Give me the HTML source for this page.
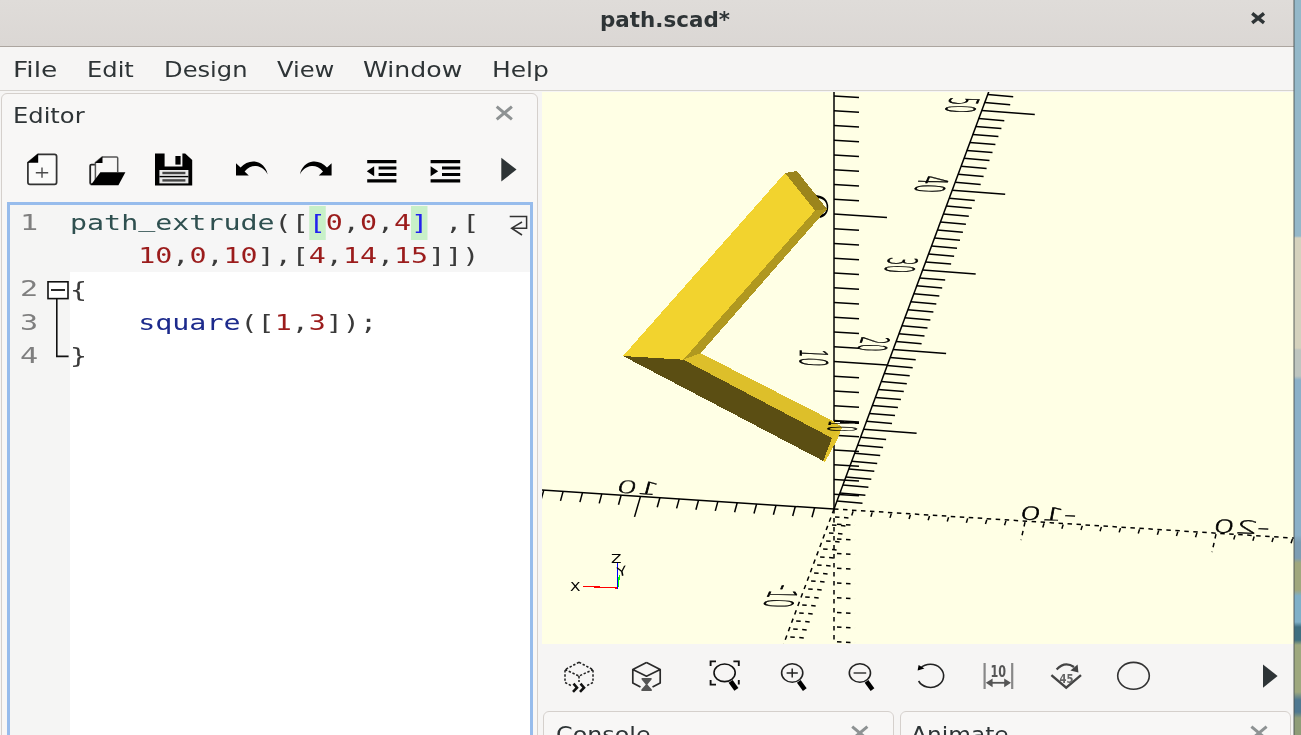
<!DOCTYPE html>
<html lang="en">
<head>
<meta charset="utf-8">
<title>path.scad*</title>
<style>
html,body{margin:0;padding:0;}
body{width:1301px;height:735px;overflow:hidden;position:relative;background:#8fb3c4;font-family:"DejaVu Sans","Liberation Sans",sans-serif;color:#2e3436;}
.abs{position:absolute;}
#desk{left:1294px;top:0;width:7px;height:735px;background:linear-gradient(to bottom,#94b8c9 0,#94b8c9 236px,#d5d2bd 238px,#d5d2bd 348px,#bec5bf 350px,#bec5bf 376px,#8bb0c8 380px,#8bb0c8 535px,#7d9db3 542px,#7d9db3 558px,#a0a77d 563px,#a0a77d 590px,#7fb0c8 596px,#7fb0c8 622px,#3f6f80 627px,#3f6f80 640px,#9ea87e 645px,#9ea87e 692px,#4f7890 700px,#4f7890 712px,#8f9d78 718px,#8f9d78 735px);}
#deskedge{left:1293px;top:0;width:1.5px;height:735px;background:rgba(70,80,80,.45);}
#win{left:0;top:0;width:1294px;height:735px;background:#f6f5f4;overflow:hidden;}
#title{left:0;top:0;width:1294px;height:46px;background:linear-gradient(to bottom,#dfdcd9,#dbd7d4);border-bottom:1px solid #aca59f;}
.tt{left:600px;top:5px;font-weight:bold;font-size:21.2px;line-height:30px;color:#2e3436;white-space:nowrap;transform-origin:0 0;transform:scaleX(1.012);will-change:transform;}
#menubar{left:0;top:47px;width:1294px;height:43px;background:#f6f5f4;border-bottom:1px solid #d6d3cf;}
.ui{font-size:21.9px;line-height:28px;white-space:nowrap;color:#2e3436;transform-origin:0 0;transform:scaleX(1.105);will-change:transform;}
#dock{left:1.2px;top:92.8px;width:536.5px;height:660px;border:1.8px solid #d5d0cc;border-radius:6px;background:#f8f7f6;box-sizing:border-box;}
#edframe{left:6.6px;top:201.8px;width:526.4px;height:560px;box-sizing:border-box;border:3.5px solid #97bcec;background:#fff;}
#margin{left:9.8px;top:205px;width:60.2px;height:540px;background:#f5f5f4;}
.code{font-family:"DejaVu Sans Mono","Liberation Mono",monospace;font-size:20.6px;line-height:34px;white-space:pre;color:#3a3a3a;transform-origin:0 0;transform:scaleX(1.375);will-change:transform;}
.ln{font-family:"DejaVu Sans Mono","Liberation Mono",monospace;font-size:20.4px;line-height:34px;color:#7f7f7f;transform-origin:0 0;transform:scaleX(1.48);will-change:transform;}
.num{color:#9b1c1c;}
.id{color:#2f5050;}
.kw{color:#1c2a8c;}
.br{color:#2222ee;background:#c8f0c8;display:inline-block;height:34px;vertical-align:top;}
.tab{border:1.6px solid #d5d0cc;border-radius:6px;background:#f8f7f6;box-sizing:border-box;}
</style>
</head>
<body>
<div id="desk" class="abs"></div>
<div id="win" class="abs">
  <div id="title" class="abs"></div>
  <div class="tt abs">path.scad*</div>
  <svg class="abs" style="left:1240px;top:5px" width="40" height="30" viewBox="1240 5 40 30"><path d="M1252.2 13.4 L1264 22.8 M1264 13.4 L1252.2 22.8" stroke="#2e3436" stroke-width="3.4" fill="none"/></svg>
  <div id="menubar" class="abs"></div>
  <div class="ui abs" style="left:13.4px;top:56.3px;transform:scaleX(1.21)">File</div>
  <div class="ui abs" style="left:86.6px;top:56.3px">Edit</div>
  <div class="ui abs" style="left:164px;top:56.3px">Design</div>
  <div class="ui abs" style="left:277px;top:56.3px">View</div>
  <div class="ui abs" style="left:363.4px;top:56.3px;transform:scaleX(1.15)">Window</div>
  <div class="ui abs" style="left:491.6px;top:56.3px;transform:scaleX(1.14)">Help</div>

  <div id="dock" class="abs"></div>
  <div class="ui abs" style="left:13px;top:102.3px">Editor</div>
  <svg class="abs" style="left:490px;top:100px" width="30" height="26" viewBox="490 100 30 26"><path d="M496.7 106.7 L511.90000000000003 119.3 M511.90000000000003 106.7 L496.7 119.3" stroke="#8e9293" stroke-width="3" fill="none"/></svg>
  <svg class="abs" style="left:0;top:140px" width="540" height="60" viewBox="0 140 540 60">
<g fill="#fbfbfa" stroke="#333" stroke-width="1.75" stroke-linejoin="round">
<path d="M38 154.4 H54.5 Q56.6 154.4 56.6 156.5 V182.3 Q56.6 184.4 54.5 184.4 H30 Q27.9 184.4 27.9 182.3 V162.6 Z"/>
</g>
<path d="M27.4 162.8 L38.2 153.6 V162.8 Z" fill="#000"/>
<path d="M35.8 172.7 H48.2 M42 167.6 V177.8" stroke="#4a4a4a" stroke-width="1.4" fill="none"/>
<!-- open -->
<path d="M95.6 164.6 H91.4 Q90.2 164.6 90.2 165.8 V183 Q90.2 184.2 91.4 184.2 H94" fill="none" stroke="#222" stroke-width="1.8"/>
<path d="M95.4 183 V162.6 L102.2 156.9 H116.5 Q117.7 156.9 117.7 158.1 V172" fill="none" stroke="#555" stroke-width="1.5"/>
<path d="M95 162.9 L102.5 156.4 V162.9 Z" fill="#000"/>
<path d="M100.4 172.2 H125.4 L118.4 185.2 H90.6 Z" fill="#000"/>
<!-- save -->
<path d="M155 153.4 H164.6 V166.6 H182.4 V153.4 H185.2 L192.2 160 V185.6 H155 Z" fill="#000"/>
<rect x="175.4" y="156" width="5.2" height="8.6" fill="#000"/>
<rect x="159.4" y="170" width="29" height="13.4" fill="#e8e8e8"/>
<rect x="162.4" y="171.8" width="23" height="2.4" fill="#444"/>
<rect x="159.4" y="175.9" width="29" height="1.4" fill="#000"/>
<rect x="162.4" y="179.2" width="23" height="2.4" fill="#444"/>
<!-- undo -->
<path d="M236 163.2 L236 175.6 L248.8 175.6 L244.6 171.4 C248 167.2 252.5 165.6 256 166 C261.5 166.6 265.5 170 267.6 174.4 C266.4 167.6 261 162.2 254.5 161.6 C249.5 161.1 244.4 163.4 240.6 167.6 Z" fill="#000"/>
<!-- redo -->
<path d="M331.6 163.2 L331.6 175.6 L318.8 175.6 L323 171.4 C319.6 167.2 315.1 165.6 311.6 166 C306.1 166.6 302.1 170 300 174.4 C301.2 167.6 306.6 162.2 313.1 161.6 C318.1 161.1 323.2 163.4 327 167.6 Z" fill="#000"/>
<!-- unindent -->
<g stroke="#000" stroke-width="3.2">
<path d="M367.2 161.7 H396.4 M378.6 168 H396.4 M378.6 174.5 H396.4 M367.2 180.8 H396.4"/>
<path d="M430.6 161.7 H460.2 M442 168 H460.2 M442 174.5 H460.2 M430.6 180.8 H460.2"/>
</g>
<path d="M366.8 171.3 L374.2 166.3 V176.3 Z" fill="#000"/>
<path d="M430.6 166.3 L438.2 171.3 L430.6 176.3 Z" fill="#000"/>
<!-- play -->
<path d="M501.3 157.8 L516.5 169.6 L501.3 181.5 Z" fill="#2e3436"/>
</svg>

  <div id="edframe" class="abs"></div>
  <div id="margin" class="abs"></div>
  <div class="abs" style="left:70px;top:205px;width:459.8px;height:66.5px;background:#f6f6f6"></div>
  <div class="ln abs" style="left:19.8px;top:205.6px">1</div>
  <div class="ln abs" style="left:19.8px;top:272.2px">2</div>
  <div class="ln abs" style="left:19.8px;top:305.5px">3</div>
  <div class="ln abs" style="left:19.8px;top:338.8px">4</div>
  <div class="code abs" style="left:70.4px;top:206px"><span class="id">path<span style="position:relative;top:-3px">_</span>extrude</span>([<span class="br">[</span><span class="num">0</span>,<span class="num">0</span>,<span class="num">4</span><span class="br">]</span> ,[</div>
  <div class="code abs" style="left:70.4px;top:239.3px">    <span class="num">10</span>,<span class="num">0</span>,<span class="num">10</span>],[<span class="num">4</span>,<span class="num">14</span>,<span class="num">15</span>]])</div>
  <div class="code abs" style="left:70.4px;top:272.6px">{</div>
  <div class="code abs" style="left:70.4px;top:305.9px">    <span class="kw">square</span>([<span class="num">1</span>,<span class="num">3</span>]);</div>
  <div class="code abs" style="left:70.4px;top:339.2px">}</div>
  <svg class="abs" style="left:40px;top:204px" width="500" height="180" viewBox="40 204 500 180">
    <g fill="none" stroke="#111" stroke-width="1.4">
      <rect x="48" y="281.8" width="20" height="16.8" fill="#fff" stroke-width="1.6"/>
      <path d="M51 290 H65" stroke-width="1.8"/>
      <path d="M56.8 298.6 V356.4 H68.6" stroke-width="1.6"/>
      <path d="M509.7 216.5 H526.6 V228.2 H512.6 M522 222 L511.6 228.2 L522 235" stroke="#333" stroke-width="1.5"/>
    </g>
  </svg>

  <svg class="abs" style="left:542px;top:92px;will-change:transform" width="752" height="552" viewBox="542 92 752 552">
<rect x="542" y="92" width="752" height="552" fill="#ffffe5"/>
<g stroke="#000" stroke-width="1.5" fill="none">
<g id="axsolid"><line x1="834.0" y1="509.0" x2="834.0" y2="90.0"/><line x1="834.0" y1="494.2" x2="859.0" y2="495.8"/><line x1="834.0" y1="479.5" x2="859.0" y2="481.0"/><line x1="834.0" y1="464.8" x2="859.0" y2="466.2"/><line x1="834.0" y1="450.0" x2="859.0" y2="451.5"/><line x1="834.0" y1="435.2" x2="859.0" y2="436.8"/><line x1="834.0" y1="420.5" x2="859.0" y2="422.0"/><line x1="834.0" y1="405.8" x2="859.0" y2="407.2"/><line x1="834.0" y1="391.0" x2="859.0" y2="392.5"/><line x1="834.0" y1="376.2" x2="859.0" y2="377.8"/><line x1="834.0" y1="361.5" x2="887.0" y2="365.0"/><line x1="834.0" y1="346.8" x2="859.0" y2="348.2"/><line x1="834.0" y1="332.0" x2="859.0" y2="333.5"/><line x1="834.0" y1="317.2" x2="859.0" y2="318.8"/><line x1="834.0" y1="302.5" x2="859.0" y2="304.0"/><line x1="834.0" y1="287.8" x2="859.0" y2="289.2"/><line x1="834.0" y1="273.0" x2="859.0" y2="274.5"/><line x1="834.0" y1="258.2" x2="859.0" y2="259.8"/><line x1="834.0" y1="243.5" x2="859.0" y2="245.0"/><line x1="834.0" y1="228.8" x2="859.0" y2="230.2"/><line x1="834.0" y1="214.0" x2="887.0" y2="217.5"/><line x1="834.0" y1="199.2" x2="859.0" y2="200.8"/><line x1="834.0" y1="184.5" x2="859.0" y2="186.0"/><line x1="834.0" y1="169.8" x2="859.0" y2="171.2"/><line x1="834.0" y1="155.0" x2="859.0" y2="156.5"/><line x1="834.0" y1="140.2" x2="859.0" y2="141.8"/><line x1="834.0" y1="125.5" x2="859.0" y2="127.0"/><line x1="834.0" y1="110.8" x2="859.0" y2="112.2"/><line x1="834.0" y1="96.0" x2="859.0" y2="97.5"/><line x1="834.0" y1="509.0" x2="989.4" y2="90.0"/><line x1="837.0" y1="501.0" x2="862.5" y2="503.2"/><line x1="839.9" y1="493.1" x2="865.4" y2="495.3"/><line x1="842.9" y1="485.1" x2="868.4" y2="487.3"/><line x1="845.8" y1="477.1" x2="871.3" y2="479.3"/><line x1="848.8" y1="469.1" x2="874.3" y2="471.3"/><line x1="851.7" y1="461.2" x2="877.2" y2="463.4"/><line x1="854.7" y1="453.2" x2="880.2" y2="455.4"/><line x1="857.6" y1="445.2" x2="883.1" y2="447.4"/><line x1="860.6" y1="437.3" x2="886.1" y2="439.5"/><line x1="863.6" y1="429.3" x2="916.6" y2="433.3"/><line x1="866.5" y1="421.3" x2="892.0" y2="423.5"/><line x1="869.5" y1="413.4" x2="895.0" y2="415.6"/><line x1="872.4" y1="405.4" x2="897.9" y2="407.6"/><line x1="875.4" y1="397.4" x2="900.9" y2="399.6"/><line x1="878.3" y1="389.4" x2="903.8" y2="391.6"/><line x1="881.3" y1="381.5" x2="906.8" y2="383.7"/><line x1="884.2" y1="373.5" x2="909.7" y2="375.7"/><line x1="887.2" y1="365.5" x2="912.7" y2="367.7"/><line x1="890.2" y1="357.6" x2="915.7" y2="359.8"/><line x1="893.1" y1="349.6" x2="946.1" y2="353.6"/><line x1="896.1" y1="341.6" x2="921.6" y2="343.8"/><line x1="899.0" y1="333.7" x2="924.5" y2="335.9"/><line x1="902.0" y1="325.7" x2="927.5" y2="327.9"/><line x1="904.9" y1="317.7" x2="930.4" y2="319.9"/><line x1="907.9" y1="309.8" x2="933.4" y2="311.9"/><line x1="910.8" y1="301.8" x2="936.3" y2="304.0"/><line x1="913.8" y1="293.8" x2="939.3" y2="296.0"/><line x1="916.7" y1="285.8" x2="942.2" y2="288.0"/><line x1="919.7" y1="277.9" x2="945.2" y2="280.1"/><line x1="922.7" y1="269.9" x2="975.7" y2="273.9"/><line x1="925.6" y1="261.9" x2="951.1" y2="264.1"/><line x1="928.6" y1="254.0" x2="954.1" y2="256.2"/><line x1="931.5" y1="246.0" x2="957.0" y2="248.2"/><line x1="934.5" y1="238.0" x2="960.0" y2="240.2"/><line x1="937.4" y1="230.1" x2="962.9" y2="232.2"/><line x1="940.4" y1="222.1" x2="965.9" y2="224.3"/><line x1="943.3" y1="214.1" x2="968.8" y2="216.3"/><line x1="946.3" y1="206.1" x2="971.8" y2="208.3"/><line x1="949.3" y1="198.2" x2="974.8" y2="200.4"/><line x1="952.2" y1="190.2" x2="1005.2" y2="194.2"/><line x1="955.2" y1="182.2" x2="980.7" y2="184.4"/><line x1="958.1" y1="174.3" x2="983.6" y2="176.5"/><line x1="961.1" y1="166.3" x2="986.6" y2="168.5"/><line x1="964.0" y1="158.3" x2="989.5" y2="160.5"/><line x1="967.0" y1="150.4" x2="992.5" y2="152.6"/><line x1="969.9" y1="142.4" x2="995.4" y2="144.6"/><line x1="972.9" y1="134.4" x2="998.4" y2="136.6"/><line x1="975.9" y1="126.4" x2="1001.4" y2="128.6"/><line x1="978.8" y1="118.5" x2="1004.3" y2="120.7"/><line x1="981.8" y1="110.5" x2="1034.8" y2="114.5"/><line x1="984.7" y1="102.5" x2="1010.2" y2="104.7"/><line x1="987.7" y1="94.6" x2="1013.2" y2="96.8"/><line x1="834.0" y1="509.0" x2="540.0" y2="489.9"/><line x1="814.6" y1="507.7" x2="812.0" y2="517.2"/><line x1="795.3" y1="506.5" x2="792.7" y2="516.0"/><line x1="776.0" y1="505.2" x2="773.4" y2="514.7"/><line x1="756.6" y1="504.0" x2="754.0" y2="513.5"/><line x1="737.2" y1="502.7" x2="734.6" y2="512.2"/><line x1="717.9" y1="501.4" x2="715.3" y2="510.9"/><line x1="698.5" y1="500.2" x2="695.9" y2="509.7"/><line x1="679.2" y1="498.9" x2="676.6" y2="508.4"/><line x1="659.9" y1="497.7" x2="657.2" y2="507.2"/><line x1="640.5" y1="496.4" x2="634.5" y2="516.9"/><line x1="621.1" y1="495.2" x2="618.5" y2="504.7"/><line x1="601.8" y1="493.9" x2="599.2" y2="503.4"/><line x1="582.5" y1="492.6" x2="579.9" y2="502.1"/><line x1="563.1" y1="491.4" x2="560.5" y2="500.9"/><line x1="543.8" y1="490.1" x2="541.1" y2="499.6"/></g>
<g id="axdash" stroke-dasharray="4.5 4.5"><line x1="834.0" y1="509.0" x2="1296.0" y2="538.2"/><line x1="853.1" y1="511.2" x2="850.6" y2="519.2"/><line x1="872.2" y1="512.4" x2="869.7" y2="520.4"/><line x1="891.3" y1="513.6" x2="888.8" y2="521.6"/><line x1="910.4" y1="514.8" x2="907.9" y2="522.8"/><line x1="929.5" y1="516.0" x2="927.0" y2="524.0"/><line x1="948.6" y1="517.2" x2="946.1" y2="525.2"/><line x1="967.7" y1="518.4" x2="965.2" y2="526.4"/><line x1="986.8" y1="519.7" x2="984.3" y2="527.7"/><line x1="1005.9" y1="520.9" x2="1003.4" y2="528.9"/><line x1="1025.0" y1="522.1" x2="1021.0" y2="540.1"/><line x1="1044.1" y1="523.3" x2="1041.6" y2="531.3"/><line x1="1063.2" y1="524.5" x2="1060.7" y2="532.5"/><line x1="1082.3" y1="525.7" x2="1079.8" y2="533.7"/><line x1="1101.4" y1="526.9" x2="1098.9" y2="534.9"/><line x1="1120.5" y1="528.1" x2="1118.0" y2="536.1"/><line x1="1139.6" y1="529.3" x2="1137.1" y2="537.3"/><line x1="1158.7" y1="530.5" x2="1156.2" y2="538.5"/><line x1="1177.8" y1="531.7" x2="1175.3" y2="539.7"/><line x1="1196.9" y1="532.9" x2="1194.4" y2="540.9"/><line x1="1216.0" y1="534.1" x2="1212.0" y2="552.1"/><line x1="1235.1" y1="535.3" x2="1232.6" y2="543.3"/><line x1="1254.2" y1="536.5" x2="1251.7" y2="544.5"/><line x1="1273.3" y1="537.8" x2="1270.8" y2="545.8"/><line x1="1292.4" y1="539.0" x2="1289.9" y2="547.0"/><line x1="834.0" y1="509.0" x2="834.0" y2="646.0"/><line x1="837.0" y1="524.2" x2="855.0" y2="525.2"/><line x1="837.0" y1="538.9" x2="855.0" y2="539.9"/><line x1="837.0" y1="553.6" x2="855.0" y2="554.6"/><line x1="837.0" y1="568.3" x2="855.0" y2="569.3"/><line x1="837.0" y1="583.0" x2="855.0" y2="584.0"/><line x1="837.0" y1="597.7" x2="855.0" y2="598.7"/><line x1="837.0" y1="612.4" x2="855.0" y2="613.4"/><line x1="837.0" y1="627.1" x2="855.0" y2="628.1"/><line x1="837.0" y1="641.8" x2="855.0" y2="642.8"/><line x1="834.0" y1="509.0" x2="782.9" y2="646.0"/><line x1="835.0" y1="517.0" x2="852.5" y2="518.2"/><line x1="832.0" y1="525.0" x2="849.5" y2="526.2"/><line x1="829.0" y1="533.0" x2="846.5" y2="534.2"/><line x1="826.1" y1="541.0" x2="843.6" y2="542.2"/><line x1="823.1" y1="549.0" x2="840.6" y2="550.2"/><line x1="820.1" y1="557.0" x2="837.6" y2="558.2"/><line x1="817.1" y1="565.0" x2="834.6" y2="566.2"/><line x1="814.1" y1="573.0" x2="831.6" y2="574.2"/><line x1="811.1" y1="581.0" x2="828.6" y2="582.2"/><line x1="808.2" y1="589.0" x2="825.7" y2="590.2"/><line x1="805.2" y1="597.0" x2="822.7" y2="598.2"/><line x1="802.2" y1="605.0" x2="819.7" y2="606.2"/><line x1="799.2" y1="613.0" x2="816.7" y2="614.2"/><line x1="796.2" y1="621.0" x2="813.7" y2="622.2"/><line x1="793.2" y1="629.0" x2="810.7" y2="630.2"/><line x1="790.3" y1="637.0" x2="807.8" y2="638.2"/><line x1="787.3" y1="645.0" x2="804.8" y2="646.2"/></g>
</g>
<g font-family="'DejaVu Sans','Liberation Sans',sans-serif" font-weight="200" fill="#000" stroke="#000" stroke-width="0.6">
<text transform="matrix(0 5.14 -3.8 -0.1 800 190)" font-size="10" vector-effect="non-scaling-stroke" stroke="none">0</text>
</g>
<g id="obj" shape-rendering="crispEdges">
<polygon points="623,356 785,173 815,210.6 683.3,359.7" fill="#f2d32e"/>
<polygon points="785,173 797,171 827,209 815,210.6" fill="#9b851c"/>
<polygon points="815,210.6 827,209 700.6,353.2 683.3,359.7" fill="#b0981f"/>
<polygon points="683.3,359.7 700.6,353.2 832,420.4 842.2,427 832,438" fill="#ddbf2a"/>
<polygon points="623,356 683.3,359.7 832,438 823.3,461" fill="#5b4e13"/>
<polygon points="832,438 842.2,427 836.5,441 825,462 823.3,461" fill="#e3c32b"/>
</g>
<g stroke="#000" stroke-width="1.25" shape-rendering="crispEdges">
<line x1="834.0" y1="421.5" x2="859.0" y2="423.0"/>
</g>
<g font-family="'DejaVu Sans','Liberation Sans',sans-serif" font-weight="200" fill="#000" stroke="#000" stroke-width="0.6">
<text transform="matrix(0 1.35 -3.8 -0.2 799.5 348.5)" font-size="10" vector-effect="non-scaling-stroke">10</text><text transform="matrix(-0.15 0.865 -3.9 -0.05 829.5 420.5)" font-size="10" vector-effect="non-scaling-stroke">10</text><text transform="matrix(-0.36 1.15 -3.85 -0.1 862 336.5)" font-size="10" vector-effect="non-scaling-stroke">20</text><text transform="matrix(-0.45 1.21 -3.98 -0.1 889.5 257)" font-size="10" vector-effect="non-scaling-stroke">30</text><text transform="matrix(-0.58 1.33 -4.0 -0.1 921 175.5)" font-size="10" vector-effect="non-scaling-stroke">40</text><text transform="matrix(-0.53 1.22 -4.0 -0.1 951 97)" font-size="10" vector-effect="non-scaling-stroke">50</text><text transform="matrix(-0.6 1.41 -3.9 -0.1 772.5 584.5)" font-size="10" vector-effect="non-scaling-stroke">-10</text><text transform="matrix(-3.3 -0.21 -0.45 1.71 657 495)" font-size="10" vector-effect="non-scaling-stroke">10</text><text transform="matrix(-3.49 -0.1 -0.33 1.78 1075.4 521)" font-size="10" vector-effect="non-scaling-stroke">-10</text><text transform="matrix(-3.49 -0.1 -0.33 1.78 1268.8 534)" font-size="10" vector-effect="non-scaling-stroke">-20</text>
</g>
<g id="gizmo" shape-rendering="crispEdges" stroke-width="1.3">
<line x1="583" y1="586.3" x2="617.5" y2="588" stroke="#f00"/>
<line x1="617.3" y1="563" x2="617.3" y2="588.5" stroke="#00f"/>
<line x1="619.3" y1="575" x2="618.3" y2="587" stroke="#0f0"/>
</g>
<g font-family="'DejaVu Sans','Liberation Sans',sans-serif" font-weight="400" fill="#000" font-size="12.6">
<text x="611" y="562.5" textLength="10.5" lengthAdjust="spacingAndGlyphs">Z</text>
<text x="570" y="590.5" textLength="10.5" lengthAdjust="spacingAndGlyphs">X</text>
<text transform="matrix(1 -0.25 0.2 1 618 577)" textLength="9.5" lengthAdjust="spacingAndGlyphs">Y</text>
</g>
</svg>
  <svg class="abs" style="left:542px;top:644px;will-change:transform" width="752" height="68" viewBox="542 644 752 68">
<!-- preview (dashed cube) -->
<g fill="none" stroke="#222" stroke-width="1.55" stroke-dasharray="2.4 1.7">
<path d="M579 662.3 L593 669.6 V682.4 L587 685.6 M579 662.3 L565 669.6 V682.4 L571.5 685.8 M565 669.6 L579 676 L593 669.6 M579 676 V682"/>
</g>
<g fill="none" stroke="#111" stroke-width="2.6">
<path d="M573.5 683.6 L577 687.6 L573 691.8 M580.5 683.6 L584 687.6 L580 691.8"/>
</g>
<!-- render (solid cube + hourglass) -->
<g fill="none" stroke="#2a2a2a" stroke-width="1.7" stroke-linejoin="round">
<path d="M646.5 662.6 L660.2 669.6 V683 L652.5 687 M646.5 662.6 L632.8 669.6 V683 L640.5 687 M632.8 669.6 L646.5 676.2 L660.2 669.6"/>
</g>
<path d="M641.6 678 H651.6 V679.6 L647.4 684.4 L651.8 689.6 V691 H641.4 V689.6 L645.8 684.4 L641.6 679.6 Z" fill="#555"/>
<!-- view all -->
<g fill="none" stroke="#111" stroke-width="1.9">
<path d="M710.6 666 V661.4 H716 M733.4 661.4 H738.8 V666 M710.6 680 V684.6 H716 M738.8 680 V684.4"/>
<ellipse cx="724.6" cy="672.8" rx="10.6" ry="8.8" stroke-width="1.6"/>
</g>
<path d="M730.6 681.4 L736.4 689.4" stroke="#000" stroke-width="5" fill="none"/>
<!-- zoom in -->
<ellipse cx="792.2" cy="673" rx="10.6" ry="9.2" fill="none" stroke="#222" stroke-width="1.6"/>
<path d="M786.6 673 H797.8 M792.2 668.4 V677.6" stroke="#222" stroke-width="1.5" fill="none"/>
<path d="M798.8 681.4 L804.8 689.6" stroke="#000" stroke-width="4.6" fill="none"/>
<!-- zoom out -->
<ellipse cx="859.9" cy="673" rx="10.6" ry="9.2" fill="none" stroke="#222" stroke-width="1.6"/>
<path d="M853.6 673 H866.2" stroke="#444" stroke-width="1.6" fill="none"/>
<path d="M866.5 681.4 L872.5 689.6" stroke="#000" stroke-width="4.6" fill="none"/>
<!-- reset view -->
<path d="M920.5 668.2 A13.2 11.6 0 1 1 918.6 681" fill="none" stroke="#222" stroke-width="1.6"/>
<path d="M917.6 670.6 L918.6 665 L924.4 668.6 Z" fill="#000"/>
<!-- distance -->
<path d="M984.6 663 V689 M1012.2 663 V689" stroke="#888" stroke-width="2.2" fill="none"/>
<path d="M989 682.8 H1008" stroke="#555" stroke-width="1.8" fill="none"/>
<path d="M985.8 682.8 L992.6 678.4 V687.2 Z M1011 682.8 L1004.2 678.4 V687.2 Z" fill="#555"/>
<text x="990.4" y="677" font-family="'DejaVu Sans','Liberation Sans',sans-serif" font-stretch="condensed" font-weight="bold" font-size="15.5" fill="#555" textLength="15.6" lengthAdjust="spacingAndGlyphs">10</text>
<!-- 45 -->
<path d="M1051.4 675.2 L1066.2 687.6 L1081 675.2" fill="none" stroke="#444" stroke-width="2.4"/>
<path d="M1056.6 669.4 Q1065 660.6 1074 667" fill="none" stroke="#444" stroke-width="2.2"/>
<path d="M1070.4 670.4 L1077.6 664.6 L1078.4 672.4 Z" fill="#444"/>
<text x="1059.6" y="682.6" font-family="'DejaVu Sans','Liberation Sans',sans-serif" font-weight="bold" font-size="12.5" fill="#666" textLength="14" lengthAdjust="spacingAndGlyphs">45</text>
<!-- circle -->
<ellipse cx="1133.5" cy="675.8" rx="15.8" ry="13.4" fill="none" stroke="#333" stroke-width="1.6"/>
<!-- play -->
<path d="M1263 664.6 L1277.6 676.1 L1263 687.8 Z" fill="#2e3436"/>
</svg>

  <div class="tab abs" style="left:543px;top:711px;width:350.5px;height:60px"></div>
  <div class="tab abs" style="left:900px;top:711px;width:391px;height:60px"></div>
  <div class="ui abs" style="left:556px;top:720.5px;transform:scaleX(1.088)">Console</div>
  <div class="ui abs" style="left:910.8px;top:720.5px;transform:scaleX(1.065)">Animate</div>
  <svg class="abs" style="left:840px;top:716px" width="460" height="20" viewBox="840 716 460 20"><path d="M852.1999999999999 726.7 L867.4 739.3 M867.4 726.7 L852.1999999999999 739.3" stroke="#8e9293" stroke-width="3" fill="none"/><path d="M1251.4 726.7 L1266.6 739.3 M1266.6 726.7 L1251.4 739.3" stroke="#8e9293" stroke-width="3" fill="none"/></svg>
</div>
<div id="deskedge" class="abs"></div>
</body>
</html>
